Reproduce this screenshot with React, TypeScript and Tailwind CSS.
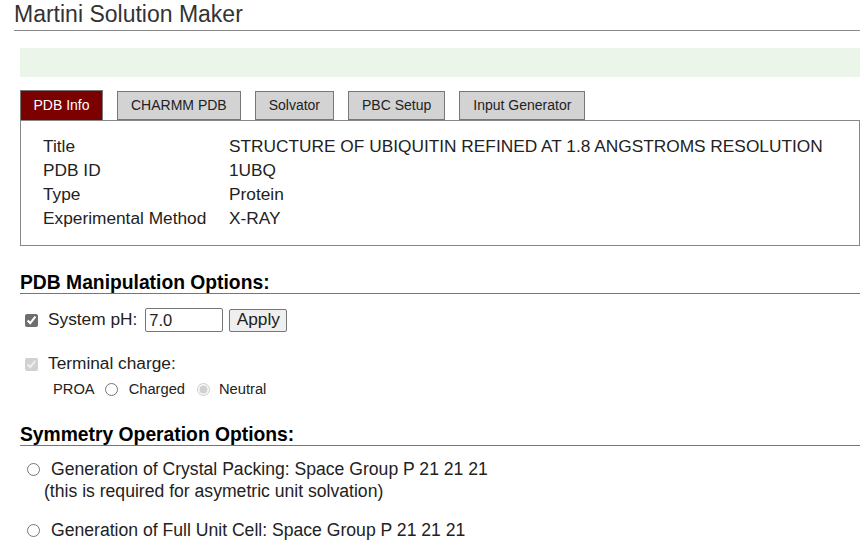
import React from 'react';

const tabs = ['PDB Info', 'CHARMM PDB', 'Solvator', 'PBC Setup', 'Input Generator'];

const info: [string, string][] = [
    ['Title', 'STRUCTURE OF UBIQUITIN REFINED AT 1.8 ANGSTROMS RESOLUTION'],
    ['PDB ID', '1UBQ'],
    ['Type', 'Protein'],
    ['Experimental Method', 'X-RAY'],
];

export default function App() {
    return (
        <div className="w-[860px] h-[560px] overflow-hidden bg-white text-[#222] font-['Liberation_Sans',Arial,sans-serif]">
            {/* HEADER */}
            <h1 className="ml-[14px] pt-[1px] h-[31px] border-b border-[#8a8a8a] text-[23px] leading-[26px] text-[#333]">
                Martini Solution Maker
            </h1>

            <div className="ml-[20px] mt-[17px] h-[29px] bg-[#ebf5ea]" />

            {/* TABS */}
            <div className="ml-[20px] mt-[13px] flex gap-[14px] items-end">
                {tabs.map((t, i) => (
                    <div
                        key={t}
                        className={
                            i === 0
                                ? 'h-[30px] w-[83px] justify-center flex items-center border border-b-0 border-[#777] bg-[#7b0000] text-white text-[14px]'
                                : 'h-[29px] px-[13px] flex items-center border border-[#777] bg-[#d3d3d3] text-[#222] text-[14px]'
                        }
                    >
                        {t}
                    </div>
                ))}
            </div>

            {/* INFO BOX */}
            <div className="ml-[20px] border border-[#888] pl-[22px] pt-[13px] pb-[15px] text-[17.3px] leading-[24px]">
                {info.map(([k, v]) => (
                    <div key={k} className="flex">
                        <div className="w-[186px]">{k}</div>
                        <div>{v}</div>
                    </div>
                ))}
            </div>

            {/* PDB MANIPULATION */}
            <h2 className="ml-[20px] mt-[27px] border-b border-[#777] text-[19.3px] leading-[20px] font-bold text-black">
                PDB Manipulation Options:
            </h2>

            <div className="ml-[25px] mt-[13px] flex items-center h-[26px] text-[17.3px]">
                <input type="checkbox" defaultChecked className="m-0 w-[13px] h-[13px] accent-[#6e6e6e]" />
                <span className="ml-[10px]">System pH:</span>
                <input
                    type="text"
                    defaultValue="7.0"
                    className="ml-[8px] w-[78px] h-[24px] px-[3px] border border-[#767676] rounded-[2px] text-[16.5px] text-[#222] outline-none"
                />
                <button className="ml-[6px] h-[23px] w-[58px] border border-[#767676] rounded-[2px] bg-[#efefef] text-[17.3px] leading-none">
                    Apply
                </button>
            </div>

            <div className="ml-[25px] mt-[21px] flex items-center h-[20px] text-[17.3px]">
                <input type="checkbox" defaultChecked disabled className="m-0 w-[13px] h-[13px]" />
                <span className="ml-[10px]">Terminal charge:</span>
            </div>
            <div className="ml-[53px] mt-[5px] flex items-center h-[20px] text-[14.7px]">
                <span>PROA</span>
                <input type="radio" name="proa" className="ml-[10px] m-0 w-[13px] h-[13px]" />
                <span className="ml-[11px]">Charged</span>
                <input type="radio" name="proa" defaultChecked disabled className="ml-[12px] m-0 w-[13px] h-[13px]" />
                <span className="ml-[9px]">Neutral</span>
            </div>

            {/* SYMMETRY */}
            <h2 className="ml-[20px] mt-[26px] border-b border-[#777] text-[19.3px] leading-[20px] font-bold text-black">
                Symmetry Operation Options:
            </h2>

            <div className="ml-[27px] mt-[14px] text-[17.6px] leading-[19px]">
                <div className="flex items-center h-[19px]">
                    <input type="radio" name="sym" className="m-0 w-[13px] h-[13px]" />
                    <span className="ml-[11px]">Generation of Crystal Packing: Space Group P 21 21 21</span>
                </div>
                <div className="ml-[17px] mt-[3px]">(this is required for asymetric unit solvation)</div>
            </div>

            <div className="ml-[27px] mt-[20px] flex items-center h-[19px] text-[17.6px] leading-[19px]">
                <input type="radio" name="sym" className="m-0 w-[13px] h-[13px]" />
                <span className="ml-[11px]">Generation of Full Unit Cell: Space Group P 21 21 21</span>
            </div>
        </div>
    );
}
